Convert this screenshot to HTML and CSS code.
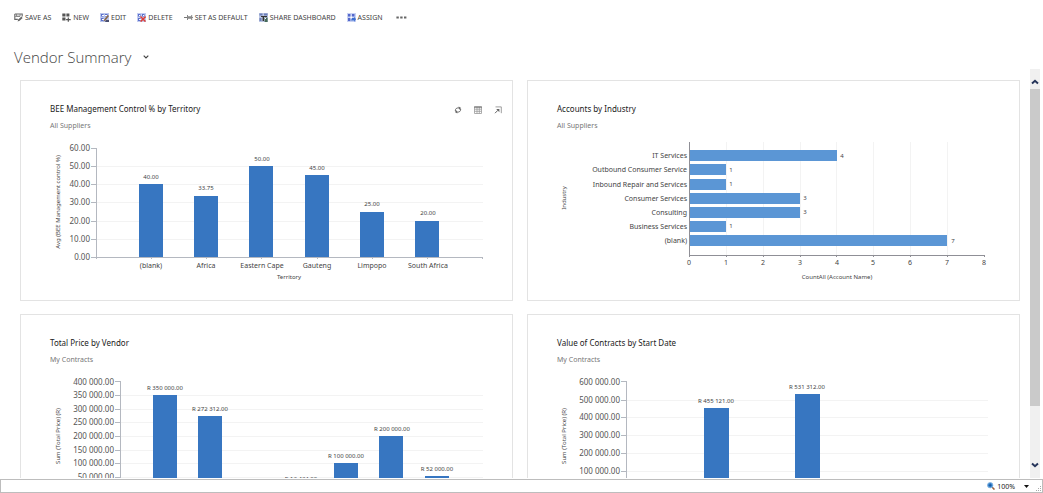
FILE: index.html
```html
<!DOCTYPE html>
<html lang="en">
<head>
<meta charset="utf-8">
<title>Vendor Summary</title>
<link rel="stylesheet" href="styles.css">
</head>
<body>
<div class="app">
  <nav class="toolbar" aria-label="Commands">
    <button class="command"><svg class="icon" viewBox="0 0 9 9"><path d="M.8 1h7.4v2.6M.8 1v5.4h3" fill="none" stroke="#666" stroke-width="1.1"/><path d="M1 3.4h5M2.5 1v2.2h3.6V1" fill="none" stroke="#777" stroke-width=".8"/><path d="M3.6 8.4l.6-2L7.4 3.6l1.2 1.3-3 2.9z" fill="#666"/></svg>SAVE AS</button>
    <button class="command"><svg class="icon" viewBox="0 0 9 9"><path d="M.3.6h3.2v3H.3zM4.4.6h3v3h-3zM.3 4.5h3.2v3H.3z" fill="#555"/><path d="M6.3 4.4v4.4M4.1 6.6h4.6" stroke="#555" stroke-width="1.2"/></svg>NEW</button>
    <button class="command"><svg class="icon" viewBox="0 0 9 9"><path d="M0 0h9v9H0z" fill="#b9c5ec"/><path d="M1 1h2.500v2.500H1zM5 1h2.500v2.500H5zM1 5h2.500v3H1z" fill="#5b70cc"/><path d="M2 2h2v1H2zM5 2h2v1H5zM2 6h2v1H2z" fill="#fff"/><path d="M3.500 8.500l1-2.400 3.300-4 1.200 1-3.500 4.300z" fill="#8c6a48"/><path d="M6 7h3v2H5z" fill="#4a4f70"/></svg>EDIT</button>
    <button class="command"><svg class="icon" viewBox="0 0 9 9"><path d="M0 0h9v9H0z" fill="#c3ccf0"/><path d="M1 1h2.500v2.500H1zM5 1h2.500v2.500H5zM1 5h2.500v3H1z" fill="#5b70cc"/><path d="M2 2h1v1H2zM6 2h1v1H6zM2 6h2v1H2z" fill="#fff"/><path d="M3.500 3.500l5 5.100M8.600 3.500l-5 5.100" stroke="#dc4038" stroke-width="1.500"/></svg>DELETE</button>
    <button class="command"><svg class="icon" viewBox="0 0 9 9"><path d="M0 4.500h3.500" stroke="#777"/><path d="M3 2h1v1.200h3.200V2h1v5h-1V5.800H4V7H3z" fill="#888"/><path d="M8 4.500h1" stroke="#888"/></svg>SET AS DEFAULT</button>
    <button class="command"><svg class="icon" viewBox="0 0 9 9"><path d="M0 0h9v9H0z" fill="#bcc7e4"/><path d="M.5.5h3v2h-3zM5 .5h3.500v2H5zM.5 5h2v3h-2z" fill="#6c7fb8"/><path d="M2 3h6v1H5v4H3.600V4H2z" fill="#333"/><path d="M5.600 4.600h3V9h-3z" fill="#476b58"/><path d="M6 5h1v1H6z" fill="#fff"/></svg>SHARE DASHBOARD</button>
    <button class="command"><svg class="icon" viewBox="0 0 9 9"><path d="M0 0h9v9H0z" fill="#c9d2f3"/><path d="M1 1h2.400v2.400H1zM5 1h2.500v2.400H5zM1 5h2.400v3H1z" fill="#5468cc"/><path d="M3.400 3.600h1.800v1.800H3.400z" fill="#fff"/><path d="M5 5h2.200V3.600L9 6.200 7.200 9V7.400H4z" fill="#3d6fd0"/></svg>ASSIGN</button>
    <button class="command" aria-label="More commands"><svg class="dots" viewBox="0 0 11 3"><path d="M.4.4h2.400v2.200H.4zM4.200.4h2.400v2.200H4.200zM8 .4h2.400v2.200H8z" fill="#666"/></svg></button>
  </nav>
  <header class="page-head">
    <h1 class="page-title">Vendor Summary</h1>
    <button class="plain" aria-label="Choose dashboard"><svg class="chevron" viewBox="0 0 6 4"><path d="M.7.7L3 3 5.300.7" fill="none" stroke="#444" stroke-width="1.2"/></svg></button>
  </header>
  <div class="body">
    <main class="dashboard">
      <section class="card">
        <div class="card-head">
          <div>
            <h2 class="card-title">BEE Management Control % by Territory</h2>
            <p class="card-view">All Suppliers</p>
          </div>
          <div class="card-tools">
            <button class="plain" aria-label="Refresh"><svg class="tool" viewBox="0 0 8 8"><path d="M1.300 5C1.300 2.600 2.500 1.800 5 1.900M6.700 3C6.700 5.400 5.500 6.200 3 6.100" fill="none" stroke="#666"/><path d="M4.600.6l2.600 1.300L5.200 3.700zM3.400 7.400L.8 6.100l2-1.800z" fill="#666"/></svg></button>
            <button class="plain" aria-label="View records"><svg class="tool" viewBox="0 0 8 8"><path d="M.5 1h7v6.500h-7zM.5 3.200h7M.5 5.300h7M3 1v6.500M5.300 1v6.500" fill="none" stroke="#999" stroke-width=".8"/><path d="M.1.5h7.800v1H.1z" fill="#666"/></svg></button>
            <button class="plain" aria-label="Enlarge chart"><svg class="tool" viewBox="0 0 8 8"><path d="M1.500.9h5.800v6.300" fill="none" stroke="#888" stroke-width=".8"/><path d="M1 7.200l3-3" stroke="#666"/><path d="M2.200 3h3.200v3.200z" fill="#666"/></svg></button>
          </div>
        </div>
        <svg class="chart" viewBox="0 0 491 165" role="img" aria-label="BEE Management Control % by Territory">
          <path class="grid" d="M76 31.500H462M76 49.500H462M76 67.500H462M76 86.500H462M76 104.500H462"/>
          <path class="axis" d="M75.500 13v111M70 13.500h5M70 31.500h5M70 49.500h5M70 67.500h5M70 86.500h5M70 104.500h5M70 122.500H462M130.500 122v2M185.500 122v2M240.500 122v2M296.500 122v2M351.500 122v2M406.500 122v2M461.500 122v2"/>
          <g class="bars"><rect x="118" y="49" width="24" height="73"/><rect x="173" y="61" width="24" height="61"/><rect x="228" y="31" width="24" height="91"/><rect x="284" y="40" width="24" height="82"/><rect x="339" y="77" width="24" height="45"/><rect x="394" y="86" width="24" height="36"/></g>
          <g class="scale end"><text x="69" y="16">60.00</text><text x="69" y="34">50.00</text><text x="69" y="52">40.00</text><text x="69" y="70">30.00</text><text x="69" y="89">20.00</text><text x="69" y="107">10.00</text><text x="69" y="125">0.00</text></g>
          <g class="category middle"><text x="130" y="133">(blank)</text><text x="185" y="133">Africa</text><text x="241" y="133">Eastern Cape</text><text x="296" y="133">Gauteng</text><text x="351" y="133">Limpopo</text><text x="407" y="133">South Africa</text></g>
          <g class="value middle"><text x="130" y="44">40.00</text><text x="185" y="55">33.75</text><text x="241" y="26">50.00</text><text x="296" y="35">45.00</text><text x="351" y="71">25.00</text><text x="407" y="80">20.00</text></g>
          <text class="caption middle" x="268" y="144">Territory</text>
          <text class="caption middle" transform="translate(39 67) rotate(-90)">Avg (BEE Management control %)</text>
        </svg>
      </section>
      <section class="card">
        <div class="card-head">
          <div>
            <h2 class="card-title">Accounts by Industry</h2>
            <p class="card-view">All Suppliers</p>
          </div>
        </div>
        <svg class="chart" viewBox="0 0 491 165" role="img" aria-label="Accounts by Industry">
          <path class="grid" d="M198.500 7v113M235.500 7v113M272.500 7v113M308.500 7v113M345.500 7v113M382.500 7v113M419.500 7v113"/>
          <g class="bars light"><rect x="162" y="15" width="147" height="11"/><rect x="162" y="29" width="36" height="11"/><rect x="162" y="44" width="36" height="11"/><rect x="162" y="58" width="110" height="11"/><rect x="162" y="72" width="110" height="11"/><rect x="162" y="86" width="36" height="11"/><rect x="162" y="100" width="257" height="11"/></g>
          <path class="axis dark" d="M161.500 7v115M161 120.500H457M198.500 120v2M235.500 120v2M272.500 120v2M308.500 120v2M345.500 120v2M382.500 120v2M419.500 120v2M456.500 120v2"/>
          <g class="category end"><text x="159" y="23">IT Services</text><text x="159" y="37">Outbound Consumer Service</text><text x="159" y="52">Inbound Repair and Services</text><text x="159" y="66">Consumer Services</text><text x="159" y="80">Consulting</text><text x="159" y="94">Business Services</text><text x="159" y="108">(blank)</text></g>
          <g class="category middle"><text x="161" y="130">0</text><text x="198" y="130">1</text><text x="235" y="130">2</text><text x="272" y="130">3</text><text x="309" y="130">4</text><text x="345" y="130">5</text><text x="382" y="130">6</text><text x="419" y="130">7</text><text x="456" y="130">8</text></g>
          <g class="value middle"><text x="314" y="23">4</text><text x="203" y="37">1</text><text x="203" y="51">1</text><text x="277" y="65">3</text><text x="277" y="79">3</text><text x="203" y="93">1</text><text x="425" y="108">7</text></g>
          <text class="caption middle" x="309" y="144">CountAll (Account Name)</text>
          <text class="caption middle" transform="translate(38 63) rotate(-90)">Industry</text>
        </svg>
      </section>
      <section class="card">
        <div class="card-head">
          <div>
            <h2 class="card-title">Total Price by Vendor</h2>
            <p class="card-view">My Contracts</p>
          </div>
        </div>
        <svg class="chart" viewBox="0 0 491 165" role="img" aria-label="Total Price by Vendor">
          <path class="grid" d="M99 26.500H462M99 40.500H462M99 53.500H462M99 67.500H462M99 81.500H462M99 94.500H462M99 108.500H462"/>
          <path class="axis" d="M99.500 12v110M94 12.500h5M94 26.500h5M94 40.500h5M94 53.500h5M94 67.500h5M94 81.500h5M94 94.500h5M94 108.500h5M94 121.500H462"/>
          <g class="bars"><rect x="132" y="26" width="24" height="95"/><rect x="177" y="47" width="24" height="74"/><rect x="268" y="118" width="24" height="3"/><rect x="313" y="94" width="24" height="27"/><rect x="358" y="67" width="24" height="54"/><rect x="404" y="107" width="24" height="14"/></g>
          <g class="scale end"><text x="93" y="16">400 000.00</text><text x="93" y="29">350 000.00</text><text x="93" y="43">300 000.00</text><text x="93" y="56">250 000.00</text><text x="93" y="70">200 000.00</text><text x="93" y="84">150 000.00</text><text x="93" y="97">100 000.00</text><text x="93" y="111">50 000.00</text></g>
          <g class="value middle"><text x="144" y="21">R 350 000.00</text><text x="189" y="42">R 272 312.00</text><text x="280" y="112">R 13 434.00</text><text x="325" y="89">R 100 000.00</text><text x="371" y="62">R 200 000.00</text><text x="416" y="102">R 52 000.00</text></g>
          <text class="caption middle" transform="translate(39 67) rotate(-90)">Sum (Total Price) (R)</text>
        </svg>
      </section>
      <section class="card">
        <div class="card-head">
          <div>
            <h2 class="card-title">Value of Contracts by Start Date</h2>
            <p class="card-view">My Contracts</p>
          </div>
        </div>
        <svg class="chart" viewBox="0 0 491 165" role="img" aria-label="Value of Contracts by Start Date">
          <path class="grid" d="M98 31.500H460M98 48.500H460M98 66.500H460M98 84.500H460M98 102.500H460"/>
          <path class="axis" d="M98.500 12v110M93 12.500h5M93 31.500h5M93 48.500h5M93 66.500h5M93 84.500h5M93 102.500h5M93 120.500H460"/>
          <g class="bars"><rect x="176" y="39" width="25" height="81"/><rect x="267" y="25" width="25" height="95"/></g>
          <g class="scale end"><text x="92" y="16">600 000.00</text><text x="92" y="34">500 000.00</text><text x="92" y="51">400 000.00</text><text x="92" y="69">300 000.00</text><text x="92" y="87">200 000.00</text><text x="92" y="105">100 000.00</text></g>
          <g class="value middle"><text x="188" y="34">R 455 121.00</text><text x="279" y="20">R 531 312.00</text></g>
          <text class="caption middle" transform="translate(38 67) rotate(-90)">Sum (Total Price) (R)</text>
        </svg>
      </section>
    </main>
    <div class="scrollbar">
      <button class="scroll-button first" aria-label="Scroll up"><svg class="arrow" viewBox="0 0 8 6"><path d="M1 4.500L4 1.800l3 2.700" fill="none" stroke="#26355a" stroke-width="2"/></svg></button>
      <div class="track"><div class="thumb"></div></div>
      <button class="scroll-button last" aria-label="Scroll down"><svg class="arrow" viewBox="0 0 8 6"><path d="M1 1.500l3 2.700 3-2.700" fill="none" stroke="#26355a" stroke-width="2"/></svg></button>
    </div>
  </div>
  <footer class="status">
    <button class="zoom"><svg class="tool" viewBox="0 0 8 8"><path d="M5 5l2.500 2.600" stroke="#a0623a" stroke-width="1.500"/><circle cx="3.200" cy="3.200" r="2.700" fill="#3f8fd6" stroke="#8ab4dd" stroke-width=".8"/><path d="M1.700 3.200h3M3.200 1.700v3" stroke="#174f96" stroke-width=".9"/></svg>100%<svg class="caret" viewBox="0 0 5 3"><path d="M0 0h5L2.500 3z" fill="#111"/></svg></button>
    <svg class="grip" viewBox="0 0 7 7"><path d="M5 1h1v1H5zM3 3h1v1H3zM5 3h1v1H5zM1 5h1v1H1zM3 5h1v1H3zM5 5h1v1H5z" fill="#aaa"/></svg>
  </footer>
</div>
</body>
</html>
```
FILE: styles.css
```css
* { box-sizing: border-box; }

body {
  margin: 0;
  background: #fff;
  color: #444;
  font-family: "Noto Sans", "Open Sans", sans-serif;
}

button {
  margin: 0;
  padding: 0;
  border: 0;
  background: none;
  color: inherit;
  font: inherit;
}

.app {
  display: flex;
  flex-direction: column;
  height: 100vh;
}

.toolbar {
  display: flex;
  align-items: center;
  gap: 11px;
  height: 34px;
  padding-left: 14px;
  font-size: 7px;
}

.command {
  display: flex;
  align-items: center;
  gap: 2px;
  white-space: nowrap;
}

.icon { width: 9px; height: 9px; }
.dots { width: 11px; height: 3px; margin-left: 2px; }

.page-head {
  display: flex;
  align-items: center;
  gap: 12px;
  height: 35px;
  padding: 10px 14px 0;
}

.page-title {
  margin: 0;
  font-family: "Open Sans", "Noto Sans", sans-serif;
  font-size: 15px;
  font-weight: 300;
  line-height: 22px;
}

.plain { display: flex; align-items: center; }
.chevron { width: 6px; height: 4px; }

.body {
  display: flex;
  flex: 1;
  min-height: 0;
  padding-right: 3px;
}

.dashboard {
  display: grid;
  flex: 1;
  grid-template-columns: 1fr 1fr;
  align-content: start;
  gap: 13px 14px;
  padding: 11px 10px 0 20px;
  overflow: hidden;
}

.card { border: 1px solid #e3e3e3; }

.card-head {
  display: flex;
  justify-content: space-between;
  align-items: flex-start;
  height: 54px;
  padding: 22px 10px 0 29px;
}

.card-title {
  margin: 0;
  color: #222;
  font-size: 8px;
  font-weight: 400;
  line-height: 12px;
}

.card-view {
  margin: 6px 0 0;
  color: #777;
  font-size: 7px;
  line-height: 10px;
}

.card-tools {
  display: flex;
  gap: 12px;
  padding-top: 3px;
}

.tool { width: 8px; height: 8px; }

.chart {
  display: block;
  width: 100%;
  height: auto;
}

.grid { fill: none; stroke: #f3f3f3; }
.axis { fill: none; stroke: #b4b8c0; }
.axis.dark { stroke: #8f8f96; }
.bars { fill: #3776c1; }
.bars.light { fill: #5b96d5; }
.scale { fill: #555; font-size: 8px; }
.category { fill: #444; font-size: 7px; }
.value { fill: #444; font-size: 6px; }
.caption { fill: #444; font-size: 6px; }
.middle { text-anchor: middle; }
.end { text-anchor: end; }

.scrollbar {
  display: flex;
  flex-direction: column;
  width: 10px;
  background: #f0f0f0;
}

.scroll-button {
  display: flex;
  align-items: center;
  justify-content: center;
  height: 20px;
}

.scroll-button.first { padding-top: 6px; }
.scroll-button.last { padding-bottom: 6px; }
.arrow { width: 8px; height: 6px; }
.track { flex: 1; }
.thumb { height: 86%; background: #cacaca; }

.status {
  display: flex;
  justify-content: flex-end;
  align-items: center;
  height: 14px;
  margin-top: 1px;
  border: 1px solid #bdbdbd;
  font-size: 7px;
  color: #222;
}

.zoom {
  display: flex;
  align-items: center;
  gap: 2px;
}

.caret { width: 5px; height: 3px; margin-left: 7px; }
.grip { align-self: flex-end; width: 7px; height: 7px; margin-left: 6px; }
```
